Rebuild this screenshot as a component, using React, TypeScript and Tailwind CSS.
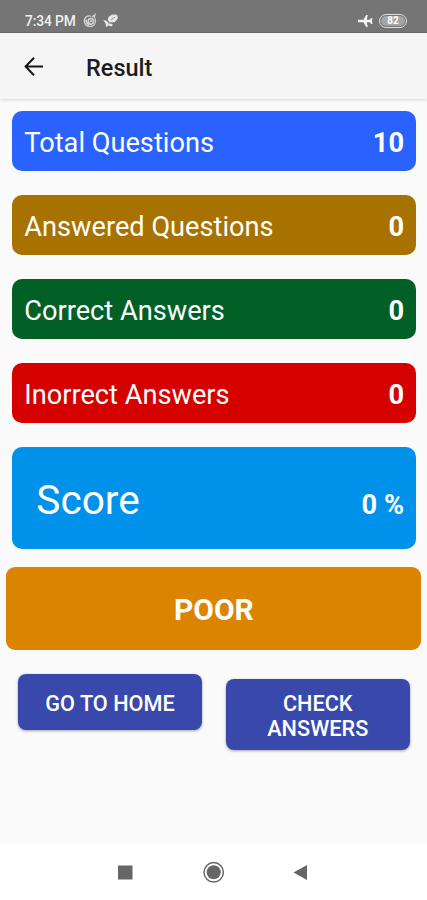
import React from "react";

type Stat = { label: string; value: string; color: string };

const stats: Stat[] = [
  { label: "Total Questions", value: "10", color: "bg-[#2962ff]" },
  { label: "Answered Questions", value: "0", color: "bg-[#a87200]" },
  { label: "Correct Answers", value: "0", color: "bg-[#026027]" },
  { label: "Inorrect Answers", value: "0", color: "bg-[#d50000]" },
];

function StatusBar() {
  return (
    <div className="flex h-[33px] items-end border-b border-[#6a6a6a] bg-[#757575] pr-[20px] pb-[3px] pl-[25px] text-[#f0f0f0]">
      <span className="w-[51px] text-[13.8px] leading-[16px] font-medium tracking-[-0.1px] whitespace-nowrap">7:34 PM</span>
      <svg className="ml-[6px] h-4 w-4" viewBox="0 0 16 16" fill="none" stroke="#d6d6d6">
        <path d="M9 3.200C5 2 2 5 2.300 8.300c.3 3 2.500 5.200 5.400 5.200 3.400 0 5.800-2.300 5.800-5.500 0-1.500-.5-2.800-1.300-3.600L13 1.600 10 4" strokeWidth="1.200" />
        <path d="M4 6.500c.5 2.200 0 4.500 3.500 5.500M7 6c2-1.200 4.500-.1 4.500 2.100S9.800 11.500 8.100 11 5.700 7.500 7 6Z" strokeWidth="1.600" />
        <path d="M8 8.200h2" strokeWidth="1.800" />
      </svg>
      <svg className="ml-[5px] h-4 w-4" viewBox="0 0 16 16" fill="#e6e6e6">
        <path d="M5.500 4 9 1.500l5 .2 1 3.500-3.300 4-4.900.3L4.700 7Z" />
        <path d="M.3 7 3.800 7.700l1.700 2.600 4.200 1-.6 2.100-3.800-1L3 14.200l-.4-3.700Z" />
        <path d="m8 7 4-3" stroke="#959595" />
      </svg>
      <span className="flex-1" />
      <svg className="mr-[6px] h-4 w-[16px]" viewBox="0 0 16 16" fill="#f4f4f4">
        <path d="M1 6.700h5.500L9.200 2h1.500L9.800 6.700h2.900l1.500-1.600h1.200L14.900 8l.5 2.900h-1.200l-1.500-1.600H9.800l.9 4.700H9.200L6.500 9.300H1Z" />
      </svg>
      <span className="mb-[1px] flex h-[14px] w-[28px] items-center justify-center rounded-full border-[1.5px] border-[#dedede] p-px">
        <span className="flex h-full w-full items-center justify-center rounded-full bg-[#a4a4a4] text-[10px] leading-none font-bold text-white">82</span>
      </span>
    </div>
  );
}

function StatCard({ label, value, color }: Stat) {
  return (
    <div className={`flex h-[60px] items-center justify-between rounded-[10px] pt-[5px] pr-[11.500px] pl-[12px] text-[27.200px] text-white ${color}`}>
      <span>{label}</span>
      <span className="font-bold">{value}</span>
    </div>
  );
}

export default function App() {
  return (
    <div className="flex h-[900px] w-full flex-col overflow-hidden bg-[#fafafa] font-['Roboto',sans-serif]">
      <StatusBar />
      <header className="flex h-[66px] shrink-0 items-center bg-[#f5f5f5] pl-[24px] shadow-[0_1px_3px_rgba(0,0,0,0.15)]">
        <svg className="h-5 w-5" viewBox="0 0 20 20" fill="none" stroke="#161616" strokeWidth="2">
          <path d="M19 10.500H2M10 1.800 1.600 10.500l8.400 8.700" />
        </svg>
        <h1 className="ml-[42px] pt-[5px] text-[23.500px] font-medium text-[#1c1c1c]">Result</h1>
      </header>
      <main className="flex flex-1 flex-col pt-[12.300px]">
        <div className="flex flex-col gap-6 pr-[11.500px] pl-[12.300px]">
          {stats.map((stat) => (
            <StatCard key={stat.label} {...stat} />
          ))}
          <div className="flex h-[101.700px] items-center justify-between rounded-[10px] bg-[#0091ea] pr-[11.500px] pl-6 text-white">
            <span className="pt-[5px] text-[40.600px]">Score</span>
            <span className="pt-[15px] text-[27.200px] font-bold">0 %</span>
          </div>
        </div>
        <div className="mr-[5.600px] ml-[6.300px] mt-[18px] flex h-[83px] items-center justify-center rounded-[9px] bg-[#db8400] pt-[2px] text-[30px] font-bold text-white">POOR</div>
        <div className="mt-6 flex items-start gap-[23.500px] pl-[18px] text-[21.700px] leading-[25px] font-medium text-white">
          <button className="h-[56.500px] w-[184px] shrink-0 rounded-[8px] bg-[#3949ab] pt-[2px] shadow-[0_1px_3px_rgba(0,0,0,0.35)]">GO TO HOME</button>
          <button className="mt-[5px] h-[71.500px] w-[184.500px] shrink-0 rounded-[8px] bg-[#3949ab] px-4 pt-[2px] shadow-[0_1px_3px_rgba(0,0,0,0.35)]">
            CHECK<br />ANSWERS
          </button>
        </div>
      </main>
      <nav className="flex h-[56px] shrink-0 items-center bg-white pl-[118px] text-[#666]">
        <svg className="h-[22px] w-[190px]" viewBox="0 0 190 22" fill="currentColor">
          <rect x="0" y="4.500" width="14.500" height="14" />
          <circle cx="95.700" cy="11.300" r="9.700" fill="none" stroke="currentColor" strokeWidth="1.500" />
          <circle cx="95.700" cy="11.300" r="7" />
          <path d="M175.500 11.500 189 4v15Z" />
        </svg>
      </nav>
    </div>
  );
}
